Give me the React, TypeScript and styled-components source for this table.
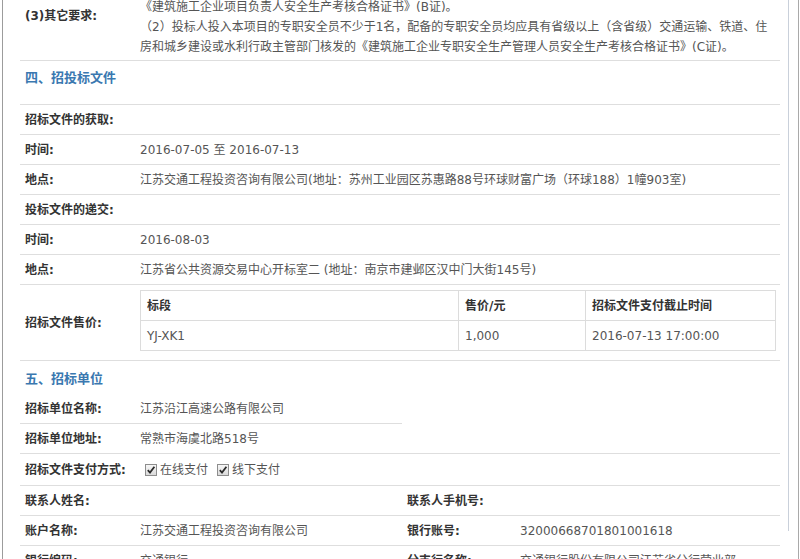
import React from "react";
import styled, { createGlobalStyle } from "styled-components";

const Global = createGlobalStyle`
  html, body { margin: 0; padding: 0; background: #fff; overflow: hidden; }
  body {
    font-family: "DejaVu Sans", "Noto Sans CJK SC", sans-serif;
    font-size: 12px;
    color: #555;
  }
`;

const Frame = styled.div`
  box-sizing: border-box;
  margin-left: 2px;
  width: 797px;
  height: 559px;
  border-left: 1px solid #9c9c9c;
  border-right: 1px solid #a9a9a9;
  overflow: hidden;
`;

const Panel = styled.div`
  box-sizing: border-box;
  width: 786px;
  height: 100%;
  border-right: 1px solid #c9d0da;
  padding-left: 17px;
`;

const Sheet = styled.div`
  width: 760px;
  margin-top: -28px;
`;

type Cols = "full" | "quad" | "half";

const Row = styled.div<{ $cols?: Cols; $minH?: number }>`
  display: grid;
  grid-template-columns: ${(p) =>
    p.$cols === "quad"
      ? "120px 262px 118px 260px"
      : p.$cols === "half"
      ? "120px 262px"
      : "120px 640px"};
  width: ${(p) => (p.$cols === "half" ? "382px" : "760px")};
  min-height: ${(p) => p.$minH ?? 29}px;
  align-items: center;
  border-bottom: 1px solid #dedede;
`;

const Label = styled.div`
  padding-left: 5px;
  line-height: 20px;
  font-weight: bold;
  color: #333;
  white-space: nowrap;
`;

const Value = styled.div<{ $pad?: string }>`
  padding: ${(p) => p.$pad ?? "0"};
  line-height: 20px;
  color: #555;
  white-space: nowrap;
`;

const Line = styled.div`
  white-space: nowrap;
`;

const SectionTitle = styled.div<{ $pt: number; $pb: number; $border?: boolean }>`
  padding: ${(p) => p.$pt}px 5px ${(p) => p.$pb}px;
  line-height: 20px;
  font-size: 13px;
  font-weight: bold;
  color: #3a78b0;
  font-family: "Noto Sans CJK SC", sans-serif;
  border-bottom: ${(p) => (p.$border ? "1px solid #dedede" : "none")};
`;

const PriceTable = styled.table`
  width: 635px;
  border-collapse: collapse;
  border: 1px solid #dcdcdc;
  table-layout: fixed;
`;

const PriceCol = styled.col<{ $w: number }>`
  width: ${(p) => p.$w}px;
`;

const PriceHead = styled.th`
  box-sizing: border-box;
  height: 30px;
  padding: 0 0 0 6px;
  text-align: left;
  font-weight: bold;
  color: #333;
  border: 1px solid #dcdcdc;
  line-height: 20px;
`;

const PriceCell = styled.td`
  box-sizing: border-box;
  height: 30px;
  padding: 0 0 0 6px;
  color: #555;
  border: 1px solid #dcdcdc;
  line-height: 20px;
`;

const PayOptions = styled.div`
  display: flex;
  align-items: center;
  padding-left: 5px;
  line-height: 20px;
`;

const Option = styled.span`
  display: inline-flex;
  align-items: center;
  margin-right: 9px;
`;

const CheckBox = styled.span`
  box-sizing: border-box;
  display: inline-flex;
  align-items: center;
  justify-content: center;
  width: 12px;
  height: 12px;
  margin-right: 3px;
  border: 1px solid #8d8d8d;
  background: linear-gradient(#f7f7f7, #dadada);
`;

const Checked = () => (
  <CheckBox>
    <svg width="10" height="10" viewBox="0 0 10 10">
      <path d="M1.8 5.2 L4 7.6 L8.4 1.8" fill="none" stroke="#2b2b2b" strokeWidth="1.8" />
    </svg>
  </CheckBox>
);

export default function App() {
  return (
    <>
      <Global />
      <Frame>
        <Panel>
          <Sheet>
            <Row $cols="full">
              <Label>(3)其它要求:</Label>
              <Value $pad="5px 0 3px 0">
                <Line>（1）投标人拟派项目负责人须具有交通运输主管部门核发的</Line>
                <Line>《建筑施工企业项目负责人安全生产考核合格证书》(B证)。</Line>
                <Line>（2）投标人投入本项目的专职安全员不少于1名，配备的专职安全员均应具有省级以上（含省级）交通运输、铁道、住</Line>
                <Line>房和城乡建设或水利行政主管部门核发的《建筑施工企业专职安全生产管理人员安全生产考核合格证书》(C证)。</Line>
              </Value>
            </Row>

            <SectionTitle $pt={6} $pb={17} $border>四、招投标文件</SectionTitle>

            <Row $cols="full">
              <Label>招标文件的获取:</Label>
              <Value />
            </Row>
            <Row $cols="full">
              <Label>时间:</Label>
              <Value>2016-07-05 至 2016-07-13</Value>
            </Row>
            <Row $cols="full">
              <Label>地点:</Label>
              <Value>江苏交通工程投资咨询有限公司(地址：苏州工业园区苏惠路88号环球财富广场（环球188）1幢903室)</Value>
            </Row>
            <Row $cols="full">
              <Label>投标文件的递交:</Label>
              <Value />
            </Row>
            <Row $cols="full">
              <Label>时间:</Label>
              <Value>2016-08-03</Value>
            </Row>
            <Row $cols="full">
              <Label>地点:</Label>
              <Value>江苏省公共资源交易中心开标室二 (地址：南京市建邺区汉中门大街145号)</Value>
            </Row>
            <Row $cols="full">
              <Label>招标文件售价:</Label>
              <Value $pad="5px 0 9px 0">
                <PriceTable>
                  <colgroup>
                    <PriceCol $w={318} />
                    <PriceCol $w={127} />
                    <PriceCol $w={190} />
                  </colgroup>
                  <thead>
                    <tr>
                      <PriceHead>标段</PriceHead>
                      <PriceHead>售价/元</PriceHead>
                      <PriceHead>招标文件支付截止时间</PriceHead>
                    </tr>
                  </thead>
                  <tbody>
                    <tr>
                      <PriceCell>YJ-XK1</PriceCell>
                      <PriceCell>1,000</PriceCell>
                      <PriceCell>2016-07-13 17:00:00</PriceCell>
                    </tr>
                  </tbody>
                </PriceTable>
              </Value>
            </Row>

            <SectionTitle $pt={7} $pb={6}>五、招标单位</SectionTitle>

            <Row $cols="half">
              <Label>招标单位名称:</Label>
              <Value>江苏沿江高速公路有限公司</Value>
            </Row>
            <Row $cols="full">
              <Label>招标单位地址:</Label>
              <Value>常熟市海虞北路518号</Value>
            </Row>
            <Row $cols="full" $minH={31}>
              <Label>招标文件支付方式:</Label>
              <PayOptions>
                <Option>
                  <Checked />
                  在线支付
                </Option>
                <Option>
                  <Checked />
                  线下支付
                </Option>
              </PayOptions>
            </Row>
            <Row $cols="quad">
              <Label>联系人姓名:</Label>
              <Value />
              <Label>联系人手机号:</Label>
              <Value />
            </Row>
            <Row $cols="quad">
              <Label>账户名称:</Label>
              <Value>江苏交通工程投资咨询有限公司</Value>
              <Label>银行账号:</Label>
              <Value>32000668701801001618</Value>
            </Row>
            <Row $cols="quad">
              <Label>银行编码:</Label>
              <Value>交通银行</Value>
              <Label>分支行名称:</Label>
              <Value>交通银行股份有限公司江苏省分行营业部</Value>
            </Row>
          </Sheet>
        </Panel>
      </Frame>
    </>
  );
}
